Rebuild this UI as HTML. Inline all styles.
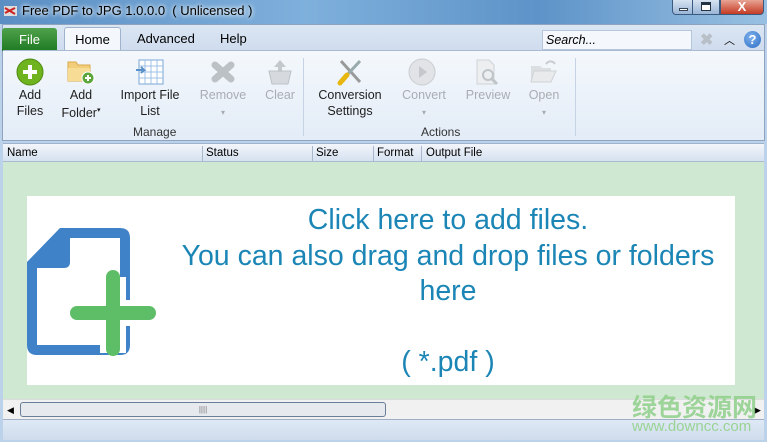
<!DOCTYPE html>
<html><head><meta charset="utf-8"><style>
*{margin:0;padding:0;box-sizing:border-box}
body{width:767px;height:442px;overflow:hidden;font-family:"Liberation Sans",sans-serif;font-size:12px;position:relative;background:#bcd1ea}
.abs{position:absolute}
.title{left:0;top:0;width:767px;height:24px;background:linear-gradient(90deg,#5b8fc4 0%,#7fb0dc 40%,#5d93c8 70%,#98c0e2 100%)}
.ttext{left:22px;top:3px;font-size:13px;color:#000;text-shadow:0 0 6px #fff,0 0 4px #fff}
.win{top:0;height:15px;border:1px solid #3b5a80;border-top:none}
.rib{left:2px;top:24px;width:763px;height:117px;background:#dfe9f5;border:1px solid #8ea3bf}
.tabs{left:3px;top:25px;width:761px;height:26px;background:linear-gradient(#dbe6f3,#cfdcee)}
.body{left:3px;top:50px;width:761px;height:90px;background:linear-gradient(#f4f8fc,#e3ecf7);border-top:1px solid #a9bbd3}
.btn{text-align:center;font-size:12.5px;line-height:16px;color:#1e1e1e}
.dis{color:#a9adb3}
.grp{font-size:12px;color:#333}
.hdr{left:3px;top:143px;width:761px;height:19px;background:linear-gradient(#f3f6fb,#d5e1f0);border-top:1px solid #9fb2cb;border-bottom:1px solid #aabbd2;font-size:11.5px}
.hdr span{position:absolute;top:3px}
.hdr i{position:absolute;top:2px;width:1px;height:15px;background:#a8b7cb}
.main{left:3px;top:162px;width:761px;height:237px;background:#cfe8d1}
.panel{left:27px;top:196px;width:708px;height:189px;background:#fff}
.msg{left:150px;top:203px;width:596px;text-align:center;color:#1b86b6;font-size:28.5px;line-height:35.5px;white-space:nowrap}
.sb{left:3px;top:399px;width:761px;height:20px;background:#f1f1f1;border-top:1px solid #dcdcdc}
.st{left:3px;top:419px;width:761px;height:21px;background:linear-gradient(#dfe9f6,#cfdcec);border-top:1px solid #9fb0c6}
</style></head><body>
<div class="abs title"></div>
<svg class="abs" style="left:3px;top:4px" width="16" height="14"><rect x="1" y="2" width="13" height="10" fill="#ddd"/><path d="M2 4l10 6M2 9l10-5" stroke="#c22" stroke-width="2"/></svg>
<div class="abs ttext">Free PDF to JPG 1.0.0.0 &nbsp;( Unlicensed )</div>
<div class="abs win" style="left:672px;width:21px;background:linear-gradient(#d7e3f1,#9ab5d6);border-radius:0 0 0 4px"><div class="abs" style="left:6px;top:8px;width:9px;height:3px;background:#fff;border:1px solid #345"></div></div>
<div class="abs win" style="left:692px;width:28px;background:linear-gradient(#d7e3f1,#9ab5d6)"><div class="abs" style="left:8px;top:2px;width:10px;height:9px;border:1px solid #234;border-top:3px solid #234;background:#fff"></div></div>
<div class="abs win" style="left:720px;width:44px;background:linear-gradient(#e8a393,#c43a23);border-radius:0 0 4px 0;color:#fff;font-weight:bold;text-align:center;font-size:13px;line-height:13px">X</div>

<div class="abs rib"></div>
<div class="abs tabs"></div>
<div class="abs" style="left:2px;top:28px;width:55px;height:23px;background:linear-gradient(#4fa24a,#1f7a24);border-radius:3px 3px 0 0;color:#fff;font-size:13px;text-align:center;line-height:23px">File</div>
<div class="abs" style="left:64px;top:27px;width:57px;height:25px;background:#f4f8fc;border:1px solid #9fb3cc;border-bottom:none;border-radius:3px 3px 0 0;font-size:13px;text-align:center;line-height:23px">Home</div>
<div class="abs" style="left:137px;top:31px;font-size:13px">Advanced</div>
<div class="abs" style="left:220px;top:31px;font-size:13px">Help</div>
<div class="abs" style="left:542px;top:30px;width:150px;height:20px;background:#f4f7fb;border:1px solid #b7c7db;font-style:italic;font-size:12.5px;padding:2px 3px">Search...</div>
<div class="abs" style="left:700px;top:30px;color:#b8bfc6;font-size:16px;font-weight:bold">✖</div>
<div class="abs" style="left:724px;top:32px;font-size:11px">︿</div>
<div class="abs" style="left:744px;top:31px;width:17px;height:17px;border-radius:50%;background:radial-gradient(circle at 40% 35%,#7fb2ec,#2a6cc4);color:#fff;font-weight:bold;font-size:13px;text-align:center;line-height:17px">?</div>
<div class="abs body"></div>

<svg class="abs" style="left:16px;top:58px" width="28" height="28"><circle cx="14" cy="14" r="13" fill="#6fb41e" stroke="#4e8a12"/><path d="M14 7v14M7 14h14" stroke="#fff" stroke-width="4"/></svg>
<svg class="abs" style="left:66px;top:58px" width="30" height="28"><path d="M2 4h8l2 3h12v16H2z" fill="#f2cd7a" stroke="#d9a94a"/><path d="M2 10h22v13H2z" fill="#f7dc95"/><circle cx="22" cy="20" r="6" fill="#5ca63b" stroke="#fff"/><path d="M22 17v6M19 20h6" stroke="#fff" stroke-width="2"/></svg>
<svg class="abs" style="left:135px;top:59px" width="30" height="26"><rect x="4" y="1" width="24" height="24" fill="#fff" stroke="#7aa6d6"/><path d="M4 7h24M4 13h24M4 19h24M10 1v24M16 1v24M22 1v24" stroke="#9cc0e6"/><path d="M1 11h8l-3-3M9 11l-3 3" stroke="#5a90c8" stroke-width="2" fill="none"/></svg>
<svg class="abs" style="left:210px;top:60px" width="26" height="24"><path d="M5 5l16 14M21 5L5 19" stroke="#bcc1c6" stroke-width="7" stroke-linecap="round"/></svg>
<svg class="abs" style="left:266px;top:58px" width="28" height="28"><path d="M3 13h22l-3 13H6z" fill="#d6dade" stroke="#bcc1c6"/><path d="M14 2l-6 7h4v5h4V9h4z" fill="#c3c8cd"/></svg>
<svg class="abs" style="left:336px;top:58px" width="28" height="28"><path d="M5 3l19 21" stroke="#999" stroke-width="3"/><path d="M24 3L10 18" stroke="#9aa" stroke-width="3"/><path d="M11 17L4 25" stroke="#e7b70f" stroke-width="5" stroke-linecap="round"/></svg>
<svg class="abs" style="left:408px;top:58px" width="28" height="28"><circle cx="14" cy="14" r="13" fill="#e1e3e6" stroke="#c9cdd1"/><path d="M11 8l8 6-8 6z" fill="#c4c8cc"/></svg>
<svg class="abs" style="left:473px;top:58px" width="28" height="28"><path d="M4 2h12l5 5v19H4z" fill="#eceef0" stroke="#cfd3d6"/><circle cx="15" cy="17" r="5" fill="none" stroke="#bfc4c9" stroke-width="2"/><path d="M19 21l5 5" stroke="#bfc4c9" stroke-width="3"/></svg>
<svg class="abs" style="left:529px;top:58px" width="30" height="28"><path d="M2 8h9l2 2h9v14H2z" fill="#dcdfe2"/><path d="M5 13h22l-5 11H2z" fill="#e8eaec" stroke="#cfd3d6"/><path d="M17 6c3-4 7-3 9 0" stroke="#c9cdd1" stroke-width="2" fill="none"/></svg>

<div class="abs btn" style="left:10px;top:87px;width:40px">Add<br>Files</div>
<div class="abs btn" style="left:58px;top:87px;width:46px">Add<br>Folder<sup style="font-size:7px">▾</sup></div>
<div class="abs btn" style="left:114px;top:87px;width:72px">Import File<br>List</div>
<div class="abs btn dis" style="left:196px;top:87px;width:54px">Remove<br><span style="font-size:8px">▾</span></div>
<div class="abs btn dis" style="left:260px;top:87px;width:40px">Clear</div>
<div class="abs btn" style="left:312px;top:87px;width:76px">Conversion<br>Settings</div>
<div class="abs btn dis" style="left:396px;top:87px;width:56px">Convert<br><span style="font-size:8px">▾</span></div>
<div class="abs btn dis" style="left:461px;top:87px;width:54px">Preview</div>
<div class="abs btn dis" style="left:522px;top:87px;width:44px">Open<br><span style="font-size:8px">▾</span></div>
<div class="abs grp" style="left:133px;top:125px">Manage</div>
<div class="abs grp" style="left:421px;top:125px">Actions</div>
<div class="abs" style="left:303px;top:58px;width:1px;height:78px;background:#c5d3e4"></div>
<div class="abs" style="left:575px;top:58px;width:1px;height:78px;background:#c5d3e4"></div>

<div class="abs hdr"><span style="left:4px">Name</span><i style="left:199px"></i><span style="left:203px">Status</span><i style="left:309px"></i><span style="left:313px">Size</span><i style="left:370px"></i><span style="left:374px">Format</span><i style="left:418px"></i><span style="left:423px">Output File</span></div>
<div class="abs main"></div>
<div class="abs panel"></div>
<svg class="abs" style="left:27px;top:225px" width="132" height="135">
<path fill-rule="evenodd" fill="#3f82c7" d="M0,37 L33,3 H93 Q103,3 103,13 V120 Q103,130 93,130 H10 Q0,130 0,120 Z M43,13 H93 V120 H10 V43 H37 Q43,43 43,37 Z"/>
<path d="M86 52v76M50 88h72" stroke="#fff" stroke-width="26"/>
<path d="M86 52v72M50 88h72" stroke="#5ebe67" stroke-width="14" stroke-linecap="round"/></svg>
<div class="abs msg">Click here to add files.<br>You can also drag and drop files or folders<br>here<br><br>( *.pdf )</div>

<div class="abs sb"><div class="abs" style="left:4px;top:5px;font-size:9px">◀</div><div class="abs" style="left:17px;top:2px;width:366px;height:15px;border:1px solid #6a7d99;border-radius:3px;background:#e6e9ee;text-align:center;font-size:8px;line-height:13px;color:#777">||||</div><div class="abs" style="left:751px;top:5px;font-size:9px">▶</div></div>
<div class="abs st"></div>
<div class="abs" style="left:632px;top:388px;color:#8fd08a;font-size:25px;font-weight:bold;font-family:'Noto Sans CJK SC',sans-serif;opacity:.85">绿色资源网</div>
<div class="abs" style="left:632px;top:418px;color:#99d394;font-size:15px">www.downcc.com</div>
</body></html>
